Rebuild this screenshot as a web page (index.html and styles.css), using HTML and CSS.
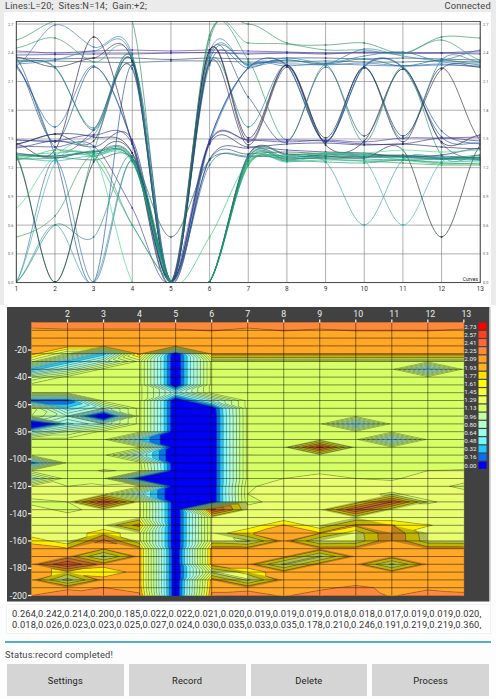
FILE: index.html
```html
<!DOCTYPE html>
<html lang="en">
<head>
  <meta charset="UTF-8">
  <meta name="viewport" content="width=device-width, initial-scale=1.0">
  <title>Survey</title>
  <link rel="stylesheet" href="styles.css">
</head>
<body>
  <div class="top-panel">
    <div class="header">
      <span class="params">Lines:L=20;&nbsp; Sites:N=14;&nbsp; Gain:+2;</span>
      <span class="connection">Connected</span>
    </div>
    <svg id="curves" class="curves" viewBox="4 12 487 293"></svg>
  </div>
  <svg id="section" class="section" viewBox="7 307 484 295"></svg>
  <div class="readings">
    <div>0.264,0.242,0.214,0.200,0.185,0.022,0.022,0.021,0.020,0.019,0.019,0.019,0.018,0.018,0.017,0.019,0.019,0.020,</div>
    <div>0.018,0.026,0.023,0.023,0.025,0.027,0.024,0.030,0.035,0.033,0.035,0.178,0.210,0.246,0.191,0.219,0.219,0.360,</div>
  </div>
  <div class="divider"></div>
  <div class="status">Status:record completed!</div>
  <div class="buttons">
    <button>Settings</button>
    <button>Record</button>
    <button>Delete</button>
    <button>Process</button>
  </div>
  <script src="script.js"></script>
</body>
</html>
```
FILE: styles.css
```css
body {
  margin: 0;
  width: 496px;
  height: 699px;
  overflow: hidden;
  background-color: #fdfdfd;
  font-family: Roboto, sans-serif;
  color: #444;
}
.top-panel {
  height: 305px;
  padding: 0 5px 0 4px;
  background-color: #ebebeb;
}
.header {
  display: flex;
  justify-content: space-between;
  height: 12px;
  padding-left: 1px;
  font-size: 9.3px;
  line-height: 12px;
  letter-spacing: 0.22px;
}
.params {
  letter-spacing: 0.16px;
}
.curves {
  display: block;
  width: 487px;
  height: 293px;
  background-color: #fff;
}
.section {
  display: block;
  width: 484px;
  height: 295px;
  margin: 2px 0 0 7px;
}
svg text {
  font-family: Roboto, sans-serif;
}
.grid {
  stroke: #777;
  stroke-width: 0.6;
}
.frame {
  fill: none;
  stroke: #333;
  stroke-width: 0.8;
}
.curve {
  fill: none;
  stroke-width: 0.65;
}
.x-label {
  font-size: 6.5px;
  fill: #333;
  text-anchor: middle;
}
.y-label {
  font-size: 3.8px;
  fill: #555;
}
.caption {
  font-size: 5px;
  fill: #222;
  text-anchor: end;
}
.backdrop {
  fill: #414141;
}
.edge {
  fill: #b5b5b5;
}
.shade {
  fill: #303000;
  fill-opacity: 0.3;
}
.contour {
  fill: none;
  stroke: #000;
  stroke-opacity: 0.6;
  stroke-width: 0.42;
}
.mesh {
  stroke: #000;
  stroke-opacity: 0.75;
  stroke-width: 0.6;
}
.tick {
  stroke: #eee;
  stroke-width: 1.3;
}
.axis-label {
  font-size: 8.8px;
  fill: #eee;
}
.top-axis {
  text-anchor: middle;
}
.side-axis {
  text-anchor: end;
}
.legend-label {
  font-size: 6.2px;
  fill: #eee;
}
.readings {
  height: 30px;
  margin: 2px 5px 0 6px;
  padding: 3px 0 0 5px;
  box-sizing: border-box;
  border: 1px solid #f1f1f1;
  background-color: #fff;
  font-size: 9.3px;
  line-height: 11.3px;
  letter-spacing: 0.15px;
  white-space: nowrap;
  color: #333;
}
.divider {
  height: 2px;
  margin: 7px 5px 0;
  background-color: #54afc4;
}
.status {
  height: 21px;
  padding-left: 5px;
  box-sizing: border-box;
  font-size: 9.3px;
  line-height: 23px;
  letter-spacing: 0.17px;
}
.buttons {
  display: grid;
  grid-template-columns: repeat(4, 1fr);
  gap: 5px;
  padding: 0 7px;
}
button {
  height: 32px;
  padding: 0;
  border: none;
  background-color: #d5d5d5;
  color: #222;
  font-family: Roboto, sans-serif;
  font-size: 9.3px;
  letter-spacing: 0.15px;
}
```
FILE: script.js
```js
const NS = 'http://www.w3.org/2000/svg';

function add(parent, tag, attrs, text) {
  const el = document.createElementNS(NS, tag);
  for (const key in attrs) el.setAttribute(key, attrs[key]);
  if (text !== undefined) el.textContent = text;
  parent.appendChild(el);
  return el;
}

// ---------- curves ----------
const curves = document.getElementById('curves');
const X0 = 16.3, DX = 38.66, TOP = 21.5, BASE = 282.6;

// one row per line: colour, then the y of each site
const lines = [
  ['#5a35b8', 51, 53, 51, 50, 51, 50, 51, 52, 53, 53, 53, 53, 51],
  ['#33309a', 55, 54.5, 54, 54, 53, 52.5, 54, 53, 54, 52, 53, 53, 54],
  ['#2c3f7a', 58, 59, 58, 58, 59.5, 58, 59, 58, 58, 59, 58, 59, 60],
  ['#285858', 61, 61, 62, 62.5, 61, 61, 62, 62, 61, 62, 62, 61, 62],
  ['#2f8f5c', 40, 21, 21, 21, 282, 40, 24, 43, 45, 43, 53, 37, 38],
  ['#3a9a68', 48, 38, 62, 60, 282, 36, 43, 44, 50, 50, 54, 40, 60],
  ['#3a7fa8', 66, 25, 47, 55, 282, 52, 66, 60, 64, 49, 56, 60, 50],
  ['#2878b8', 64, 60, 51, 58, 282, 57, 65, 58, 63, 56, 52, 62, 63],
  ['#3a2a55', 57, 67, 58, 61, 282, 50, 142, 65, 142, 67, 142, 68, 140],
  ['#176f80', 62, 67, 130, 61, 282, 60, 64, 60, 64, 59, 66, 60, 65],
  ['#1f8590', 60, 68, 128, 58, 282, 62, 127, 65, 142, 67, 139, 60, 62],
  ['#235a98', 65, 142, 67, 142, 282, 65, 68, 65, 141, 66, 67, 131, 144],
  ['#2c68b0', 68, 127, 66, 143, 282, 140, 68, 66, 64, 65, 66, 64, 67],
  ['#1d4f9d', 66, 155, 282, 65, 282, 140, 68, 66, 141, 67, 68, 137, 143],
  ['#2a3558', 144, 134, 141, 61, 282, 63, 145, 67, 138, 68, 136, 69, 67],
  ['#2f1840', 144, 150, 37, 144, 282, 50, 138, 65, 145, 141, 69, 142, 135],
  ['#3b70b8', 140, 141, 135, 68, 282, 143, 68, 64, 65, 63, 66, 65, 66],
  ['#2a9a70', 155, 282, 152, 58, 282, 35, 60, 140, 65, 142, 67, 155, 155],
  ['#33577a', 58, 147, 130, 69, 282, 53, 97, 142, 67, 136, 69, 143, 160],
  ['#3830a0', 140, 141, 135, 144, 282, 142, 140, 140, 141, 144, 144, 138, 141],
  ['#4838a0', 146, 147, 146, 208, 282, 141, 140, 142, 140, 142, 138, 138, 137],
  ['#202f68', 144, 134, 137, 153, 282, 144, 147, 144, 143, 145, 144, 147, 149],
  ['#303080', 148, 141, 147, 140, 282, 159, 148, 150, 152, 153, 157, 155, 148],
  ['#22506a', 154, 156, 152, 158, 282, 160, 154, 152, 154, 156, 155, 158, 157],
  ['#3970a4', 282, 160, 282, 160, 282, 165, 156, 158, 154, 155, 156, 157, 158],
  ['#36a0a0', 282, 225, 282, 160, 282, 282, 157, 160, 162, 225, 160, 158, 159],
  ['#3fb0bb', 282, 163, 156, 160, 282, 282, 158, 161, 157, 160, 225, 162, 160],
  ['#1f3034', 157, 282, 162, 153, 282, 282, 155, 154, 156, 158, 150, 237, 145],
  ['#20685a', 155, 157, 160, 158, 237, 160, 157, 155, 153, 154, 156, 159, 160],
  ['#2b8a88', 282, 225, 237, 156, 282, 282, 156, 155, 158, 159, 160, 159, 158],
  ['#3f9a52', 237, 216, 156, 225, 282, 282, 160, 158, 159, 161, 163, 165, 165],
  ['#46d888', 208, 156, 153, 282, 300, 282, 166, 157, 153, 153, 150, 152, 150],
  ['#23b37c', 156, 153, 158, 225, 282, 282, 163, 160, 156, 157, 158, 159, 159],
  ['#22b8ab', 158, 161, 156, 162, 282, 282, 164, 162, 160, 161, 160, 162, 161],
  ['#29ca66', 160, 150, 154, 160, 282, 237, 162, 156, 154, 155, 160, 164, 163],
  ['#1e8060', 159, 158, 152, 161, 282, 282, 161, 159, 158, 157, 156, 156, 158],
  ['#167a8a', 153, 158, 151, 157, 282, 282, 158, 157, 156, 157, 157, 159, 155],
  ['#1c9c58', 157, 156, 154, 159, 282, 282, 165, 161, 162, 163, 160, 163, 164]
];

// smooth line through all sites, as bezier segments
function spline(y) {
  const n = y.length;
  const d = y.map((v, i) => (y[Math.min(i + 1, n - 1)] - y[Math.max(i - 1, 0)]) / 2);
  let path = `M${X0} ${y[0]}`;
  for (let i = 0; i < n - 1; i++) {
    const x = X0 + DX * i;
    path += `C${x + DX / 3} ${y[i] + d[i] / 3} ${x + DX * 2 / 3} ${y[i + 1] - d[i + 1] / 3} ${x + DX} ${y[i + 1]}`;
  }
  return path;
}

function drawCurves() {
  const clip = add(curves, 'clipPath', { id: 'plot' });
  add(clip, 'rect', { x: X0, y: TOP, width: DX * 12, height: BASE - TOP });
  for (let i = 0; i < 13; i++) {
    const x = X0 + DX * i;
    add(curves, 'line', { class: 'grid', x1: x, x2: x, y1: TOP, y2: BASE });
    add(curves, 'text', { class: 'x-label', x: x, y: 291 }, i + 1);
  }
  for (let i = 0; i < 10; i++) {
    const y = BASE - 28.73 * i;
    add(curves, 'line', { class: 'grid', x1: X0, x2: X0 + DX * 12, y1: y, y2: y });
    add(curves, 'text', { class: 'y-label', x: 8, y: y + 1.5 }, (i * 0.3).toFixed(1));
    add(curves, 'text', { class: 'y-label', x: 483, y: y + 1.5 }, (i * 0.3).toFixed(1));
  }
  const plot = add(curves, 'g', { 'clip-path': 'url(#plot)' });
  for (const [color, ...y] of lines) {
    add(plot, 'path', { class: 'curve', d: spline(y), stroke: color });
    y.forEach((v, i) => {
      add(plot, 'rect', { x: X0 + DX * i - 0.8, y: v - 0.8, width: 1.6, height: 1.6, fill: color });
    });
  }
  add(curves, 'rect', { class: 'frame', x: X0, y: TOP, width: DX * 12, height: BASE - TOP });
  add(curves, 'text', { class: 'caption', x: 478, y: 281 }, 'Curves');
}

// ---------- depth section ----------
const section = document.getElementById('section');
const LEFT = 31.5, CW = 36.03, UP = 322.5, RH = 7.8;

const colors = [
  '#0000f4', '#0874ee', '#25c5f8', '#7df8fa', '#9ffce8', '#adfbd9',
  '#b7fbc2', '#c0fda0', '#caff88', '#d1ff70', '#d6ff66', '#e9ff70',
  '#fff000', '#ffa726', '#ff893a', '#ff6638', '#ff4020', '#ff0000'
];
const legendColors = [
  '#ff0000', '#ff4020', '#ff6638', '#ff893a', '#ffa028', '#ffb31d',
  '#ffe000', '#ffff00', '#f8ff38', '#eaff60', '#d8ff66', '#c6ffa0',
  '#b4ffca', '#9affea', '#70faff', '#20c8ff', '#0870f0', '#0000f4'
];

// colour level at each site, one row per depth
const G = 10.4, H = 11.3, O = 13.5;
const rows = [
  [14.5, 14.5, 14.5, 14.5, 14.5, 14.5, 14.5, 14.5, 14.5, 14.5, 14.5, 14.5, 14.5],
  [13.8, 13.9, 13.9, 13.9, 13.9, 14.05, 13.8, 14.05, 13.9, 14.05, 14.05, 14.05, 13.9],
  [O, O, O, O, O, O, O, O, O, O, O, O, O],
  [O, O, O, O, O, O, O, O, O, O, O, O, O],
  [O, 9.8, 2.2, O, -0.5, O, O, O, O, O, O, O, O],
  [G, 2.2, 6, G, -0.5, G, G, G, G, G, G, G, G],
  [2.2, 6, G, G, -0.5, G, G, G, G, G, G, 3, G],
  [8, G, G, G, -0.5, G, G, G, G, G, G, G, G],
  [G, G, G, G, -0.5, G, G, G, G, G, G, G, G],
  [G, G, G, G, 4.2, G, G, G, G, G, G, G, G],
  [0.9, 0.9, G, G, -0.5, 5, G, G, G, G, G, G, G],
  [9.5, 3.2, 6, G, -0.5, -0.3, G, G, G, G, G, G, G],
  [9, 6, -2.5, G, -0.5, -0.5, G, G, G, G, G, G, G],
  [-4, 3.6, 6, G, -0.5, -0.5, G, G, 10.4, 3, G, G, G],
  [5, 8, G, G, -0.5, -0.5, G, G, G, G, G, G, G],
  [G, G, G, 3, -0.5, -0.5, G, G, G, G, 3, G, G],
  [G, G, G, G, -0.5, -0.5, G, G, 15.5, G, G, G, G],
  [G, G, G, 5, -0.5, -0.5, G, G, G, G, G, G, G],
  [1, G, G, G, -0.5, -0.5, G, G, G, G, G, G, G],
  [G, G, 11.1, 10.8, -0.5, -0.5, G, 10.7, 10.8, 10.7, 10.7, 11, 11.1],
  [6, 10.8, G, -0.5, -0.5, -0.5, G, 11, 11.3, 11, 10.9, H, H],
  [H, 11, 11.1, H, -0.5, -0.5, 10.9, H, H, H, H, H, 10.8],
  [H, H, H, 4.5, -0.5, -0.5, 11, H, H, 11.2, 10.9, H, H],
  [10.8, 11, 15.8, H, -0.5, -0.5, 10.8, H, H, H, 15, 10.9, H],
  [H, 10.8, H, H, -0.5, 15.5, H, H, H, 15, H, H, H],
  [H, H, 11, H, -0.5, H, H, H, H, H, H, H, H],
  [H, H, H, 13.4, -0.5, H, H, 13.1, H, 13.2, 13.1, 12.1, H],
  [H, H, 12.6, H, -0.5, H, 12.9, O, 13.1, 11.4, 14, 11.3, H],
  [12.7, H, 14.3, H, -0.5, 11.4, 10.8, O, 11.1, 11.3, 14, 11.4, H],
  [O, 13.1, 13.1, O, -0.5, O, O, O, O, O, O, O, O],
  [O, O, 10.8, O, -0.5, O, O, O, 10.8, O, O, O, O],
  [O, 16, O, O, -0.5, O, O, 10.8, O, O, 10.8, O, O],
  [O, 12.6, 12.2, O, -0.5, 10.8, 12.5, O, O, O, O, O, O],
  [O, 10.6, O, O, -0.5, O, 10.8, O, O, O, O, O, O],
  [13.7, 13.8, 14.02, 13.6, -0.5, 13.7, 13.7, 13.7, 13.8, 14.2, 13.8, 13.8, 13.7],
  [14, 14.6, 14.3, 14.2, -0.5, 14.2, 14.4, 13.9, 14.4, 14.6, 13.9, 14.5, 14.2]
];

// keeps the part of a polygon whose level is above (side 1) or below (side -1) the limit
function cut(poly, limit, side) {
  const out = [];
  poly.forEach((p, i) => {
    const q = poly[(i + 1) % poly.length];
    const a = (p[2] - limit) * side, b = (q[2] - limit) * side;
    if (a >= 0) out.push(p);
    if ((a > 0 && b < 0) || (a < 0 && b > 0)) {
      const t = a / (a - b);
      out.push([p[0] + t * (q[0] - p[0]), p[1] + t * (q[1] - p[1]), limit]);
    }
  });
  return out;
}

const toPath = poly => 'M' + poly.map(p => p[0].toFixed(2) + ' ' + p[1].toFixed(2)).join('L') + 'Z';

function drawSection() {
  add(section, 'rect', { class: 'backdrop', x: 7, y: 307, width: 482, height: 294.5 });
  add(section, 'rect', { class: 'edge', x: 489, y: 307, width: 1.5, height: 294.5 });

  const fills = colors.map(() => '');
  let contour = '';
  let shade = '';

  function triangle(tri) {
    for (let k = 0; k < colors.length; k++) {
      let poly = k > 0 ? cut(tri, k, 1) : tri;
      if (poly.length) poly = cut(poly, k + 1, -1);
      if (poly.length < 3) continue;
      fills[k] += toPath(poly);
      poly.forEach((p, i) => {
        const q = poly[(i + 1) % poly.length];
        if (p[2] === k + 1 && q[2] === k + 1) {
          contour += `M${p[0].toFixed(2)} ${p[1].toFixed(2)}L${q[0].toFixed(2)} ${q[1].toFixed(2)}`;
        }
      });
    }
    // tightly packed contours read as a darker tone
    const levels = tri.map(p => p[2]);
    if (Math.min(...levels) >= 10 && Math.max(...levels) - Math.min(...levels) > 1.8) {
      shade += toPath(tri);
    }
  }

  for (let r = 0; r < 35; r++) {
    for (let c = 0; c < 12; c++) {
      const pt = (i, j) => [LEFT + CW * j, UP + RH * i, rows[i][j]];
      const a = pt(r, c), b = pt(r, c + 1), d = pt(r + 1, c + 1), e = pt(r + 1, c);
      if (Math.abs(a[2] - d[2]) < Math.abs(b[2] - e[2])) {
        triangle([a, b, d]);
        triangle([a, d, e]);
      } else {
        triangle([a, b, e]);
        triangle([b, d, e]);
      }
    }
  }

  fills.forEach((d, k) => {
    add(section, 'path', { d: d, fill: colors[k], stroke: colors[k], 'stroke-width': 0.3 });
  });
  add(section, 'path', { class: 'shade', d: shade });
  add(section, 'path', { class: 'contour', d: contour });

  for (let r = 1; r < 35; r++) {
    const y = UP + RH * r;
    add(section, 'line', { class: 'mesh', x1: LEFT, x2: LEFT + CW * 12, y1: y, y2: y });
  }
  for (let c = 1; c < 13; c++) {
    const x = LEFT + CW * c;
    if (c < 12) add(section, 'line', { class: 'mesh', x1: x, x2: x, y1: UP, y2: UP + RH * 35 });
    add(section, 'line', { class: 'tick', x1: x, x2: x, y1: 319.5, y2: 322.5 });
    add(section, 'text', { class: 'axis-label top-axis', x: x + (c > 8 ? 2.5 : 0), y: 316.8 }, c + 1);
  }
  for (let i = 1; i <= 10; i++) {
    const y = 322.8 + 27.27 * i;
    add(section, 'line', { class: 'tick', x1: 28, x2: 31.5, y1: y, y2: y });
    add(section, 'text', { class: 'axis-label side-axis', x: 27, y: y + 3 }, -20 * i);
  }

  const labels = ['2.73', '2.57', '2.41', '2.25', '2.09', '1.93', '1.77', '1.61', '1.45',
    '1.29', '1.13', '0.96', '0.80', '0.64', '0.48', '0.32', '0.16', '0.00'];
  labels.forEach((label, i) => {
    const y = 322.7 + 8.18 * i;
    add(section, 'text', { class: 'legend-label', x: 464.3, y: y + 5.9 }, label);
    add(section, 'rect', { x: 478.5, y: y, width: 8, height: 7, fill: legendColors[i] });
  });
}

drawCurves();
drawSection();
```
